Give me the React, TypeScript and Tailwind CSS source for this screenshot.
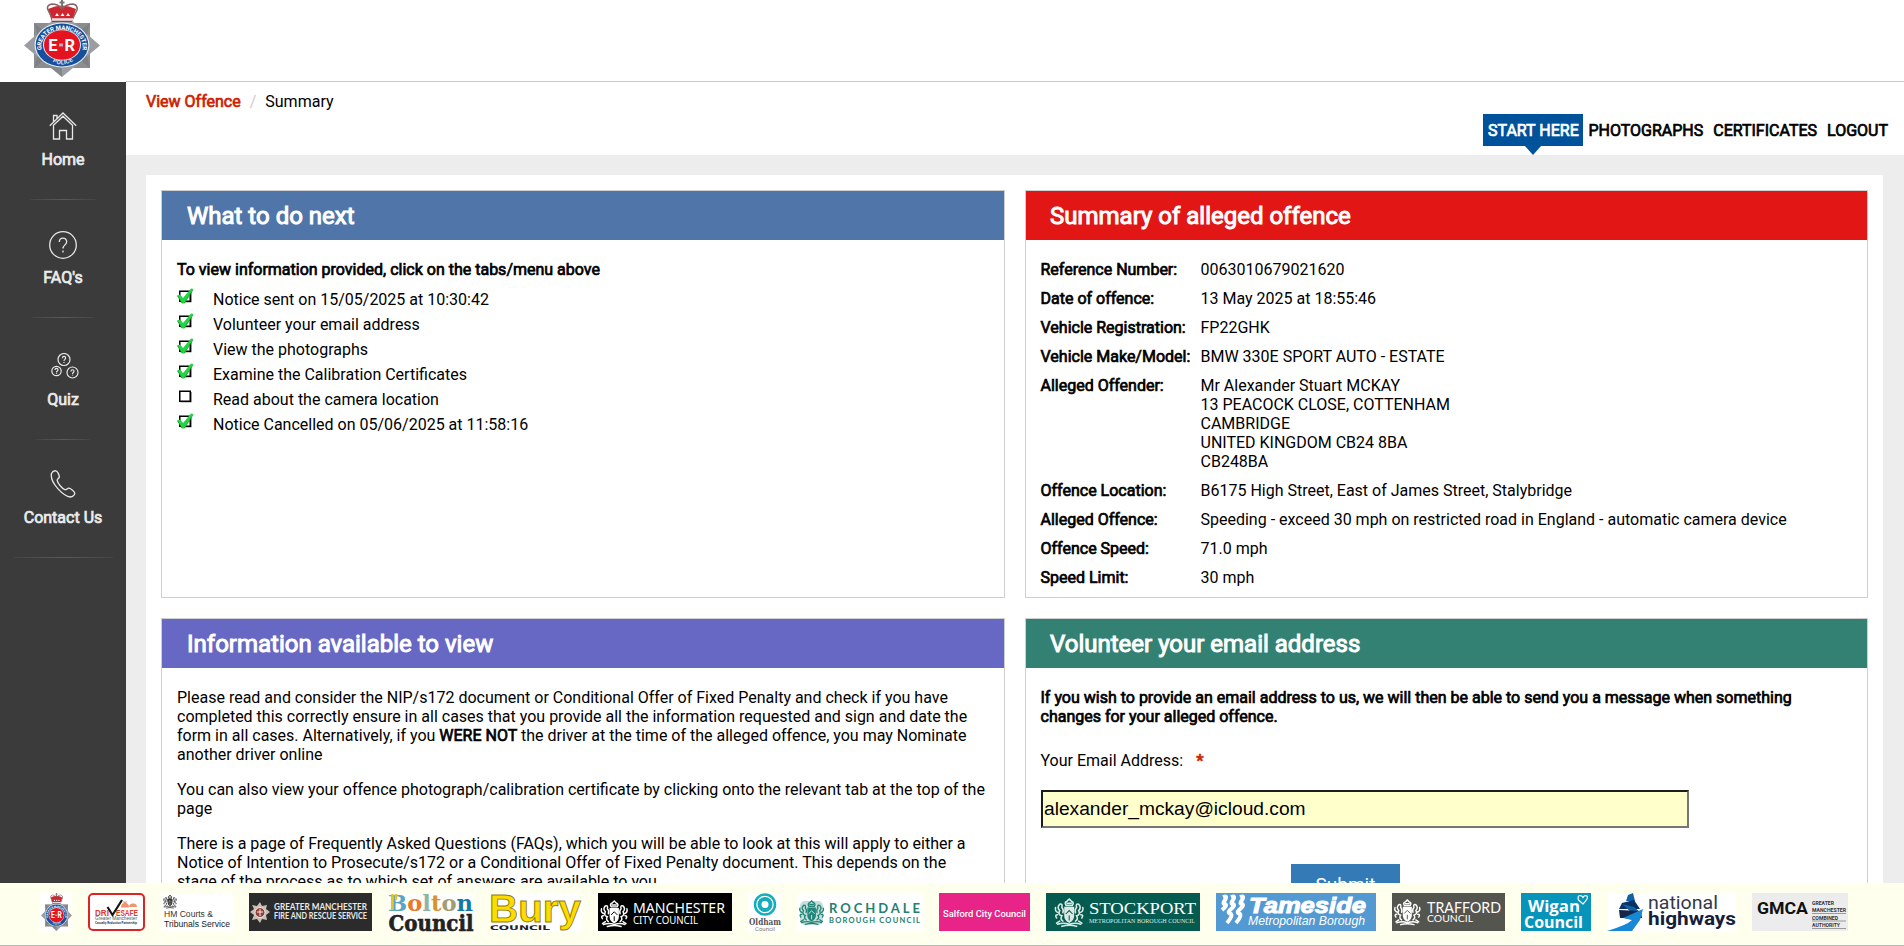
import React from "react";

const fauxBold = "[-webkit-text-stroke:0.7px_currentColor]";

function Crest() {
  return (
    <svg viewBox="0 0 76 77" preserveAspectRatio="none" className="h-full w-full overflow-visible">
      <path d="M10 23H66V68H10Z" fill="#8b8d90" />
      <path d="M38 12L76 45.500L38 77L0 45.500Z" fill="#9b9da0" />
      <path d="M10 23L38 45L10 68L17 45ZM66 23L38 45L66 68L60 45ZM38 77V60L22 64Z" fill="#77797c" opacity=".6" />
      <path d="M24 9Q38 2 52 9L48 22H28Z" fill="#cf2531" />
      <path d="M24 10Q22 5 28 4Q34 4 37 8Q38 2 39 8Q43 4 49 4Q54 5 53 10L48 20H29Z" fill="none" stroke="#8a6464" strokeWidth="1.500" />
      <path d="M38 0V6M35.500 2.500H40.500" stroke="#777" strokeWidth="2" />
      <path d="M28 19.500H49" stroke="#e8dede" strokeWidth="2.500" />
      <path d="M31 16l2-3 2 3zM36.500 16l2-3 2 3zM42 16l2-3 2 3z" fill="#fff" />
      <ellipse cx="38" cy="45" rx="27.500" ry="22.500" fill="#e6edf5" />
      <ellipse cx="38" cy="45" rx="26.300" ry="21.500" fill="#174f9c" />
      <path id="arcTop" d="M17.500 50C14 23 62 23 58.500 50" fill="none" />
      <path id="arcLow" d="M22 57Q38 72 54 57" fill="none" />
      <text fontFamily="Roboto" fontSize="6" fontWeight="700" fill="#fff">
        <textPath href="#arcTop" textLength="66">GREATER MANCHESTER</textPath>
      </text>
      <text fontFamily="Roboto" fontSize="6" fontWeight="700" fill="#dce8f5">
        <textPath href="#arcLow" startOffset="8" textLength="22">POLICE</textPath>
      </text>
      <ellipse cx="38" cy="45" rx="19" ry="15.500" fill="#e8eef6" />
      <ellipse cx="38" cy="45" rx="18" ry="14.700" fill="#e3131f" />
      <text y="51" fontFamily="Roboto" fontSize="16.500" fontWeight="700" fill="#fff">
        <tspan x="24.300">E</tspan><tspan x="40.500">R</tspan>
      </text>
      <path d="M35 43.500h4v3h-4z" fill="#b9a9c4" />
    </svg>
  );
}

function HomeIcon() {
  return (
    <svg width="28" height="28" viewBox="0 0 28 28" fill="none" stroke="#e8e8e8" strokeWidth="1.300">
      <path d="M.8 13.800L14 1L27.200 13.800M4.500 13.200V27H10.500V18.500H17.500V27H23.500V13.200L14 4.200ZM4.500 9.500V3.500H8V6.500" />
    </svg>
  );
}
function QuestionIcon({ size }: { size: number }) {
  return (
    <svg width={size} height={size} viewBox="0 0 28 28" fill="none" stroke="#e8e8e8" strokeWidth="1.300">
      <circle cx="14" cy="14" r="13.300" />
      <path d="M10.300 11C10.300 5.800 17.700 5.800 17.700 10.800C17.700 13.800 14 14 14 17.500M14 19.500V21.500" />
    </svg>
  );
}
function QuizIcon() {
  return (
    <svg width="28" height="26" viewBox="0 0 28 26" fill="none" stroke="#e8e8e8" strokeWidth="1.200" className="relative left-[2px]">
      <circle cx="13" cy="6.500" r="6" />
      <circle cx="5.500" cy="18" r="4.700" />
      <circle cx="21.500" cy="19.500" r="5.500" />
      <path d="M11.400 5.200C11.400 2.900 14.600 2.900 14.600 5C14.600 6.400 13 6.400 13 8M13 8.900V9.900M4 17C4 14.900 7 14.900 7 17C7 18.200 5.500 18 5.500 19.500M5.500 20.200V21M20 18.400C20 16.200 23 16.200 23 18.300C23 19.500 21.500 19.500 21.500 21M21.500 21.700V22.600" />
    </svg>
  );
}
function PhoneIcon() {
  return (
    <svg width="26" height="28" viewBox="0 0 26 28" fill="none" stroke="#e8e8e8" strokeWidth="1.300" strokeLinejoin="round">
      <path d="M1.500 3.500C2.500 1.500 4 .6 5.800 .8C7.500 1 9.500 5.500 9.300 7C9 8.500 7 8.700 7.200 10.500C7.800 13.500 12 18.500 14.800 19.600C16.500 20.200 17.300 18 19 18.200C20.700 18.500 24.800 21.500 24.800 23.200C24.800 25 22.500 26.800 20.500 27C14 26.500-.5 13 1.500 3.500Z" />
    </svg>
  );
}

const nav = [
  { label: "Home", icon: <HomeIcon />, box: "h-[118px] pt-[30px]", gap: "mt-[10px]", line: "w-[66px]" },
  { label: "FAQ's", icon: <QuestionIcon size={28} />, box: "h-[118px] pt-[31px]", gap: "mt-[9px]", line: "w-[62px]" },
  { label: "Quiz", icon: <QuizIcon />, box: "h-[122px] pt-[35px]", gap: "mt-[11px]", line: "w-[54px]" },
  { label: "Contact Us", icon: <PhoneIcon />, box: "h-[118px] pt-[30px]", gap: "mt-[10px]", line: "w-[99px]" },
];

function Check({ on }: { on: boolean }) {
  return (
    <svg width="17" height="18" viewBox="0 0 17 18" className="shrink-0">
      <path d="M3.500 15H14.500V5" fill="none" stroke="#999" strokeWidth="1" />
      <rect x="2.750" y="4.250" width="10.500" height="10" fill="#fff" stroke="#000" strokeWidth="1.500" />
      {on && <path d="M0 8.500L3 7.500L6 11L14 1.500L16.500 2L7.500 16.500H5Z" fill="#22d541" />}
      {on && <path d="M.5 9L5 16M7.500 16L16 3" fill="none" stroke="#118a2a" strokeWidth=".6" />}
    </svg>
  );
}

const steps: [string, boolean][] = [
  ["Notice sent on 15/05/2025 at 10:30:42", true],
  ["Volunteer your email address", true],
  ["View the photographs", true],
  ["Examine the Calibration Certificates", true],
  ["Read about the camera location", false],
  ["Notice Cancelled on 05/06/2025 at 11:58:16", true],
];

const details: [string, string[]][] = [
  ["Reference Number:", ["0063010679021620"]],
  ["Date of offence:", ["13 May 2025 at 18:55:46"]],
  ["Vehicle Registration:", ["FP22GHK"]],
  ["Vehicle Make/Model:", ["BMW 330E SPORT AUTO - ESTATE"]],
  ["Alleged Offender:", ["Mr Alexander Stuart MCKAY", "13 PEACOCK CLOSE, COTTENHAM", "CAMBRIDGE", "UNITED KINGDOM CB24 8BA", "CB248BA"]],
  ["Offence Location:", ["B6175 High Street, East of James Street, Stalybridge"]],
  ["Alleged Offence:", ["Speeding - exceed 30 mph on restricted road in England - automatic camera device"]],
  ["Offence Speed:", ["71.0 mph"]],
  ["Speed Limit:", ["30 mph"]],
];

function Panel({ title, color, className, children }: { title: string; color: string; className: string; children: React.ReactNode }) {
  return (
    <section className={`border border-[#cfcfcf] bg-white ${className}`}>
      <h2 className={`flex h-[49px] items-center text-2xl text-white [-webkit-text-stroke:1px_currentColor] ${color}`}>{title}</h2>
      {children}
    </section>
  );
}

type TProps = { x: number; y: number; s: number; w: number; f?: string; b?: number; c?: string; i?: boolean; spaced?: boolean; children: React.ReactNode };
function T({ x, y, s, w, f = "Roboto", b = 400, c = "#fff", i, spaced, children }: TProps) {
  return (
    <text x={x} y={y} fontSize={s} fontFamily={f} fontWeight={b} fill={c} fontStyle={i ? "italic" : "normal"} textLength={w} lengthAdjust={spaced ? "spacing" : "spacingAndGlyphs"}>
      {children}
    </text>
  );
}

function Logo({ w, bg, children }: { w: number; bg?: string; children: React.ReactNode }) {
  return (
    <svg width={w} height="38" viewBox={`0 0 ${w} 38`} className="shrink-0 overflow-visible">
      <rect width={w} height="38" fill={bg ?? "#fff"} />
      {children}
    </svg>
  );
}

function Arms({ x, y, k = 1, c = "#fff", bg = "#000" }: { x: number; y: number; k?: number; c?: string; bg?: string }) {
  return (
    <g transform={`translate(${x} ${y}) scale(${k})`} fill="none" stroke={c} strokeWidth="1.500" strokeLinecap="round">
      <path d="M10 9H18V17Q18 21 14 23Q10 21 10 17Z" fill={c} />
      <path d="M11 15L14 12L17 15M14 17V21" stroke={bg} strokeWidth="1" />
      <path d="M11 7Q9 4 12 3L14 1L16 3Q19 4 17 7ZM12 5H16" />
      <path d="M8 22Q5 20 7 17Q3 16 5 12Q2 9 5 6Q8 5 7 9Q9 11 8 14M4 14Q0 13 1 9M2 19Q0 16 3 16M5 22L2 24" />
      <path d="M20 22Q23 20 21 17Q25 16 23 12Q26 9 23 6Q20 5 21 9Q19 11 20 14M24 14Q28 13 27 9M26 19Q28 16 25 16M23 22L26 24" />
      <path d="M3 25Q9 23 14 25Q20 23 25 25M7 27Q14 25 21 27" />
    </g>
  );
}

function Footer() {
  const sans = "Liberation Sans";
  return (
    <footer className="absolute inset-x-0 bottom-0 flex h-[63px] gap-4 border-b border-[#b8b8b8] bg-[#ffffee] pt-[10px] pl-10">
      <div className="h-[38px] w-8 shrink-0 bg-white px-[0.5px]"><Crest /></div>
      <Logo w={57} bg="#ffffee">
        <rect x="1" y="1" width="55" height="36" rx="4" fill="#fff" stroke="#dd2326" strokeWidth="2" />
        <T x={7} y={22.500} s={9} w={14} f={sans} b={700} c="#e23b27">DRI</T>
        <T x={28} y={22.500} s={9} w={22} f={sans} b={700} c="#e23b27">ESAFE</T>
        <path d="M33 14.500q0-4 3-4.500l-1-1.500h4l-1 1.500q3 .5 3 4.500zM41 14q0-3 3-3.500h2q3 .5 3 3.500z" fill="#f09470" />
        <path d="M19.500 14L24.500 22L34 7" fill="none" stroke="#161616" strokeWidth="2.200" />
        <T x={7} y={27.200} s={4.500} w={42} f={sans} c="#555">Greater Manchester</T>
        <T x={7} y={31} s={3.200} w={42} f={sans} b={700} c="#222">Casualty Reduction Partnership</T>
      </Logo>
      <Logo w={72}>
        <Arms x={2} y={1.500} k={0.5} c="#333" bg="#fff" />
        <T x={3} y={23.500} s={8.500} w={49} f={sans} c="#333">HM Courts &amp;</T>
        <T x={3} y={34} s={8.500} w={66} f={sans} c="#222">Tribunals Service</T>
      </Logo>
      <Logo w={123} bg="#2b2b2b">
        <path d="M11 9L13 13L18 12L17 16L21 19L17 22L18 27L13 26L11 30L8 26L3 27L5 22L1 19L5 16L3 12L8 13Z" fill="#c8beb4" />
        <circle cx="11" cy="19.500" r="5" fill="#91403a" stroke="#eee" />
        <path d="M11 16v7M8 19h6" stroke="#eee" />
        <T x={25} y={17} s={9} w={93} f="Lato" b={700} c="#e9e9e9">GREATER MANCHESTER</T>
        <T x={25} y={25.500} s={8.500} w={93} f="Lato" b={700} c="#e9e9e9">FIRE AND RESCUE SERVICE</T>
      </Logo>
      <Logo w={86}>
        <text y="17.500" fontFamily="DejaVu Serif, serif" fontWeight="700" fontSize="23" textLength="85" lengthAdjust="spacingAndGlyphs">
          <tspan fill="#58a6c5">B</tspan><tspan fill="#e87a26">o</tspan><tspan fill="#8db5a1">l</tspan><tspan fill="#d9932e">t</tspan><tspan fill="#a39d76">o</tspan><tspan fill="#1579a6">n</tspan>
        </text>
        <path d="M4.500 1V17M8 1V7" stroke="#e4c52f" strokeWidth="2.500" />
        <text x="0.500" y="37.500" fontFamily="DejaVu Serif, serif" fontWeight="700" fontSize="22" fill="#222" stroke="#222" strokeWidth=".6" textLength="85" lengthAdjust="spacingAndGlyphs">Council</text>
      </Logo>
      <Logo w={92}>
        <T x={0} y={37} s={6.500} w={60} f="DejaVu Sans" b={700} c="#222">COUNCIL</T>
        <text x="-1" y="29" fontFamily="Liberation Sans" fontWeight="700" fontSize="39" fill="#ffdc00" stroke="#8d7c12" strokeWidth=".9" textLength="92" lengthAdjust="spacingAndGlyphs">Bury</text>
      </Logo>
      <Logo w={134} bg="#000">
        <Arms x={2.500} y={7} k={0.98} />
        <T x={35} y={19.500} s={14.500} w={92} f="Noto Sans">MANCHESTER</T>
        <T x={35} y={31} s={10.500} w={65} f="Noto Sans">CITY COUNCIL</T>
      </Logo>
      <Logo w={34}>
        <circle cx="17" cy="11.500" r="10" fill="none" stroke="#15adbd" strokeWidth="2.500" />
        <circle cx="17" cy="11.500" r="7.500" fill="#15adbd" />
        <circle cx="17" cy="11.500" r="3.500" fill="#fff" />
        <T x={1} y={32} s={8.500} w={32} f="DejaVu Serif" b={700} c="#555">Oldham</T>
        <T x={7} y={37.500} s={5.500} w={20} c="#777">Council</T>
      </Logo>
      <Logo w={125}>
        <rect x="2" y="8" width="23" height="24" rx="5" fill="#c5e0dc" />
        <Arms x={1} y={7} k={0.9} c="#238478" bg="#d8eeea" />
        <T x={31} y={20} s={13} w={91} f="Lato" b={700} c="#26806f" spaced>ROCHDALE</T>
        <T x={31} y={29.500} s={7.500} w={91} f="Lato" b={700} c="#26806f" spaced>BOROUGH COUNCIL</T>
      </Logo>
      <Logo w={91} bg="#e82488">
        <T x={4} y={23.500} s={9} w={83} b={500}>Salford City Council</T>
      </Logo>
      <Logo w={154} bg="#065b50">
        <Arms x={8.500} y={5} k={1.05} bg="#065b50" c="#dceae5" />
        <T x={43} y={21} s={17} w={107} f="Liberation Serif">STOCKPORT</T>
        <T x={43} y={29.500} s={6.500} w={106} f="Liberation Serif" c="#d9e9e4">METROPOLITAN BOROUGH COUNCIL</T>
      </Logo>
      <Logo w={160} bg="#5399d2">
        <path d="M7 4Q12 2 9 7Q6 11 9 11Q12 12 6 17M15 4Q20 2 17 7Q14 11 17 11Q20 12 14 17Q11 20 15 21Q17 23 11 30M24 4Q29 2 26 7Q23 11 26 11Q29 12 23 17Q20 20 24 21Q26 23 20 30" fill="none" stroke="#fff" strokeWidth="4" />
        <text x="33" y="19.500" fontFamily="Liberation Sans" fontWeight="700" fontStyle="italic" fontSize="22" fill="#fff" stroke="#fff" strokeWidth="1" textLength="117" lengthAdjust="spacingAndGlyphs">Tameside</text>
        <T x={32} y={31.500} s={12} w={117} f={sans} i>Metropolitan Borough</T>
      </Logo>
      <Logo w={113} bg="#555550">
        <Arms x={2} y={6} k={0.95} bg="#555550" />
        <T x={35} y={19.500} s={15} w={74} f="Lato">TRAFFORD</T>
        <T x={35} y={29} s={9.500} w={46} f="Lato">COUNCIL</T>
      </Logo>
      <Logo w={70} bg="#0794bb">
        <T x={7} y={19} s={16.500} w={52} f="Open Sans" b={700}>Wigan</T>
        <T x={3} y={34.500} s={16.500} w={59} f="Open Sans" b={700}>Council</T>
        <path d="M62 11L57.500 7Q56 3 59 2.500Q61 2.500 62 4.500Q63.500 2 66 3Q68 5 62 11Z" fill="none" stroke="#fff" strokeWidth="1.200" />
      </Logo>
      <Logo w={129}>
        <path d="M21 2L26 0L28 8L19 8Z" fill="#1263a4" />
        <path d="M15 10L27 7L33 16L12 16Z" fill="#0a3264" />
        <path d="M15 11L27 14L34 20L31 28L13 24L25 20Z" fill="#1263a4" />
        <path d="M12 17L34 18L35 25L13 25Z" fill="#14264a" />
        <path d="M16 25L36 16L33 27L25 38L0 38Q20 32 25 27Z" fill="#1688d5" />
        <T x={41} y={15.500} s={18.500} w={70} c="#33384b">national</T>
        <T x={41} y={32} s={18.500} w={88} b={700} c="#171e3b">highways</T>
      </Logo>
      <Logo w={96} bg="#ececed">
        <T x={5} y={21} s={16} w={51} b={700} c="#111">GMCA</T>
        <T x={60} y={12} s={4.600} w={22} b={700} c="#333">GREATER</T>
        <T x={60} y={19} s={4.600} w={34} b={700} c="#333">MANCHESTER</T>
        <T x={60} y={26.500} s={4.600} w={26} b={700} c="#333">COMBINED</T>
        <T x={60} y={33.500} s={4.600} w={28} b={700} c="#333">AUTHORITY</T>
        <path d="M60 20.500H94M60 28H94M60 35.500H94" stroke="#777" strokeWidth=".7" />
      </Logo>
    </footer>
  );
}

export default function App() {
  return (
    <div className="relative flex h-[946px] w-[1904px] flex-col overflow-hidden bg-white font-['Roboto',sans-serif] text-base leading-[19px] text-black">
      <header className="flex h-[82px] shrink-0 pl-6">
        <div className="h-[77px] w-[76px]"><Crest /></div>
      </header>
      <div className="flex min-h-0 grow">
        <nav className="w-[126px] shrink-0 bg-[#3b3b3b]">
          {nav.map((n) => (
            <div key={n.label} className={`flex flex-col items-center ${n.box}`}>
              {n.icon}
              <span className={`text-[#ececec] ${n.gap} ${fauxBold}`}>{n.label}</span>
              <span className={`mt-auto h-px bg-gradient-to-r from-[#444] via-[#5a5a5a] to-[#444] ${n.line}`} />
            </div>
          ))}
        </nav>
        <div className="-mt-px flex min-w-0 grow flex-col border-t border-[#c8cbcb]">
          <div className="h-[73px] shrink-0">
            <div className="flex h-[32px] items-start pt-[10px] pl-5">
              <span className={`text-[#cc2200] ${fauxBold}`}>View Offence</span>
              <span className="px-[9px] text-[#ccc]">/</span>
              <span>Summary</span>
            </div>
            <div className={`flex h-[32px] items-center justify-end gap-[10px] pr-4 ${fauxBold}`}>
              <span className="relative -mr-[5px] flex h-[32px] w-[100px] items-center justify-center bg-[#00529b] whitespace-nowrap text-white">
                START HERE
                <svg width="16" height="9" className="absolute top-[32px] left-[42px]"><path d="M0 0H16L8 9Z" fill="#00529b" /></svg>
              </span>
              <span>PHOTOGRAPHS</span>
              <span>CERTIFICATES</span>
              <span>LOGOUT</span>
            </div>
          </div>
          <div className="min-h-0 grow bg-[#ededed] pt-5 pr-[21px] pl-5">
            <main className="grid grid-cols-[844px_843px] gap-x-5 gap-y-5 bg-white pt-[15px] pl-[15px]">
              <Panel title="What to do next" color="bg-[#4f75a9] pl-[25px]" className="h-[408px]">
                <p className={`px-[15px] pt-5 ${fauxBold}`}>To view information provided, click on the tabs/menu above</p>
                <ul className="px-[15px] pt-[8px]">
                  {steps.map(([t, on]) => (
                    <li key={t} className="flex h-[25px] gap-[19px]">
                      <Check on={on} />
                      <span className="pt-[3px]">{t}</span>
                    </li>
                  ))}
                </ul>
              </Panel>
              <Panel title="Summary of alleged offence" color="bg-[#e21615] pl-6" className="h-[408px]">
                <dl className="flex flex-col gap-[10px] pt-5 pl-[14.5px]">
                  {details.map(([k, v]) => (
                    <div key={k} className="flex">
                      <dt className={`w-[160px] shrink-0 ${fauxBold}`}>{k}</dt>
                      <dd>{v.map((l) => <div key={l}>{l}</div>)}</dd>
                    </div>
                  ))}
                </dl>
              </Panel>
              <Panel title="Information available to view" color="bg-[#6767c4] pl-[25px]" className="h-[420px]">
                <div className="flex flex-col gap-4 px-[15px] pt-5">
                  <p>Please read and consider the NIP/s172 document or Conditional Offer of Fixed Penalty and check if you have<br />completed this correctly ensure in all cases that you provide all the information requested and sign and date the<br />form in all cases. Alternatively, if you <span className={fauxBold}>WERE NOT</span> the driver at the time of the alleged offence, you may Nominate<br />another driver online</p>
                  <p>You can also view your offence photograph/calibration certificate by clicking onto the relevant tab at the top of the<br />page</p>
                  <p>There is a page of Frequently Asked Questions (FAQs), which you will be able to look at this will apply to either a<br />Notice of Intention to Prosecute/s172 or a Conditional Offer of Fixed Penalty document. This depends on the<br />stage of the process as to which set of answers are available to you.</p>
                </div>
              </Panel>
              <Panel title="Volunteer your email address" color="bg-[#328173] pl-6" className="h-[420px]">
                <div className="flex flex-col items-start pt-5 pl-[14.5px]">
                  <p className={fauxBold}>If you wish to provide an email address to us, we will then be able to send you a message when something<br />changes for your alleged offence.</p>
                  <label className="mt-[25px]">Your Email Address: <span className="ml-[9px] font-bold text-[#cc2200] [-webkit-text-stroke:0.6px_currentColor]">*</span></label>
                  <input
                    readOnly
                    value="alexander_mckay@icloud.com"
                    className="mt-[20px] ml-[0.5px] h-[38px] w-[648px] border-2 border-t-[#1c1c1c] border-r-[#767676] border-b-[#767676] border-l-[#1c1c1c] bg-[#ffffcc] px-px font-['Liberation_Sans',sans-serif] text-[19.2px] outline-none"
                  />
                  <button className="mt-[36px] ml-[250.5px] h-[40px] w-[109px] bg-[#337ab7] text-[19px] text-white">Submit</button>
                </div>
              </Panel>
            </main>
          </div>
        </div>
      </div>
      <Footer />
    </div>
  );
}
